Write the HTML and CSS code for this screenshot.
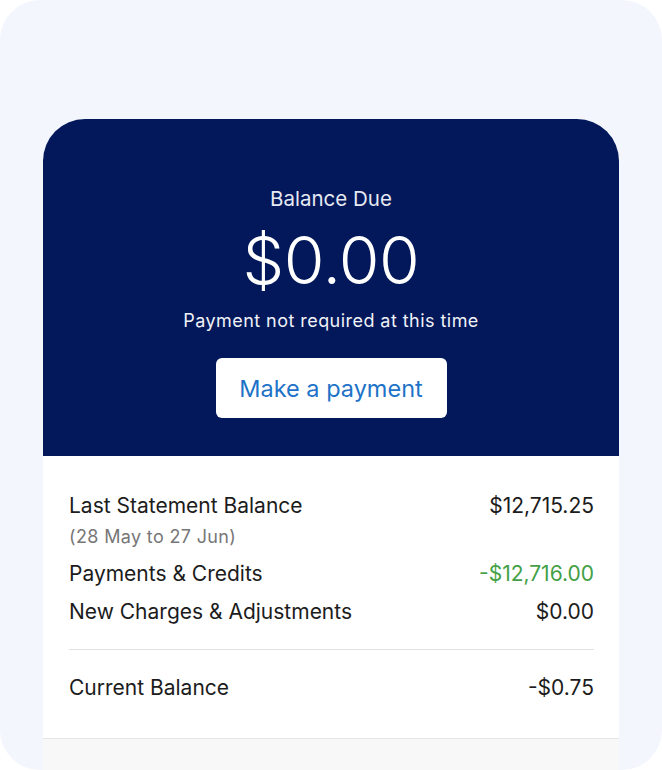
FILE: index.html
```html
<!DOCTYPE html>
<html>
<head>
<meta charset="utf-8">
<link rel="stylesheet" href="styles.css">
</head>
<body>
<div class="frame">
  <div class="card">
    <div class="hero">
      <div class="hero-label">Balance Due</div>
      <div class="hero-amount">$0.00</div>
      <div class="hero-note">Payment not required at this time</div>
      <button class="pay-btn">Make a payment</button>
    </div>
    <div class="summary">
      <div class="row row-first">
        <span class="label">Last Statement Balance</span>
        <span class="value">$12,715.25</span>
      </div>
      <div class="sub">(28 May to 27 Jun)</div>
      <div class="row">
        <span class="label">Payments &amp; Credits</span>
        <span class="value credit">-$12,716.00</span>
      </div>
      <div class="row">
        <span class="label">New Charges &amp; Adjustments</span>
        <span class="value">$0.00</span>
      </div>
      <div class="divider"></div>
      <div class="row">
        <span class="label">Current Balance</span>
        <span class="value">-$0.75</span>
      </div>
    </div>
    <div class="footer"></div>
  </div>
</div>
</body>
</html>
```
FILE: styles.css
```css
html, body {
  margin: 0;
  padding: 0;
  background: #ffffff;
}
body {
  font-family: Inter, "Noto Sans", "Liberation Sans", sans-serif;
}
.frame {
  width: 662px;
  height: 770px;
  background: #f3f6fd;
  border-radius: 40px;
  overflow: hidden;
  padding-top: 119px;
  box-sizing: border-box;
}
.card {
  margin-left: 43px;
  width: 576px;
  background: #ffffff;
  border-radius: 42px 42px 0 0;
  overflow: hidden;
}
.hero {
  background: #02185a;
  height: 337px;
  box-sizing: border-box;
  padding-top: 68px;
  display: flex;
  flex-direction: column;
  align-items: center;
  color: #ffffff;
}
.hero-label {
  font-size: 20.5px;
  line-height: 24px;
  color: #e6e9f2;
}
.hero-amount {
  font-size: 66px;
  font-weight: 300;
  line-height: 80px;
  margin-top: 9px;
  letter-spacing: -0.5px;
}
.hero-note {
  font-size: 18px;
  line-height: 24px;
  margin-top: 9px;
  letter-spacing: 0.45px;
  color: #f0f2f7;
}
.pay-btn {
  margin-top: 25px;
  width: 231px;
  height: 60px;
  background: #ffffff;
  border: none;
  border-radius: 6px;
  color: #1e73c8;
  font-family: inherit;
  font-size: 23.5px;
  padding: 0;
}
.summary {
  padding: 38px 25px 38px 26px;
  border-bottom: 1px solid #e6e6e6;
}
.row {
  display: flex;
  justify-content: space-between;
  font-size: 21px;
  line-height: 24px;
  color: #1c1c1c;
  margin-top: 14px;
}
.row-first {
  margin-top: 0;
}
.sub {
  font-size: 18px;
  line-height: 22px;
  letter-spacing: 0.35px;
  color: #777777;
  margin-top: 8px;
}
.credit {
  color: #43a047;
}
.divider {
  height: 1px;
  background: #e2e2e2;
  margin: 25px 0 26px;
}
.footer {
  height: 40px;
  background: #f8f8f8;
}
```
